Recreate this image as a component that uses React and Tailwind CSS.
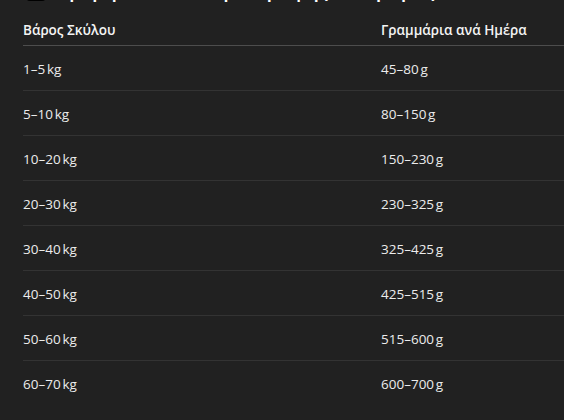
import React from 'react';

const rows = [
  ['1–5\u202Fkg', '45–80\u202Fg'],
  ['5–10\u202Fkg', '80–150\u202Fg'],
  ['10–20\u202Fkg', '150–230\u202Fg'],
  ['20–30\u202Fkg', '230–325\u202Fg'],
  ['30–40\u202Fkg', '325–425\u202Fg'],
  ['40–50\u202Fkg', '425–515\u202Fg'],
  ['50–60\u202Fkg', '515–600\u202Fg'],
  ['60–70\u202Fkg', '600–700\u202Fg'],
];

const App = () => {
  return (
    <div className="h-screen w-full overflow-hidden bg-[#212121] text-[#ececec] font-['Open_Sans',sans-serif]">
      <div className="pl-[23px]">
        <h2 className="-mt-[24px] mb-[11px] flex items-center gap-[8px] text-[20px] leading-[28px] font-semibold text-white">
          <span className="ml-[3px] inline-block w-[20px] h-[22px] bg-black rounded-sm" />
          <span>Ημερήσια ποσότητα τροφής ανά βάρος σκύλου</span>
        </h2>
        <table className="w-[716px] border-collapse text-[13.5px] leading-[20px] text-left">
          <thead>
            <tr className="border-b border-[#4d4d4d]">
              <th className="w-[358px] pt-[5px] pb-[5px] font-semibold text-[#f4f4f4]">Βάρος Σκύλου</th>
              <th className="pt-[5px] pb-[5px] font-semibold text-[#f4f4f4]">Γραμμάρια ανά Ημέρα</th>
            </tr>
          </thead>
          <tbody>
            {rows.map(([w, g], i) => (
              <tr key={i} className="border-b border-[#333333] last:border-b-0">
                <td className="pt-[13px] pb-[11px]">{w}</td>
                <td className="pt-[13px] pb-[11px]">{g}</td>
              </tr>
            ))}
          </tbody>
        </table>
      </div>
    </div>
  );
};

export default App;
